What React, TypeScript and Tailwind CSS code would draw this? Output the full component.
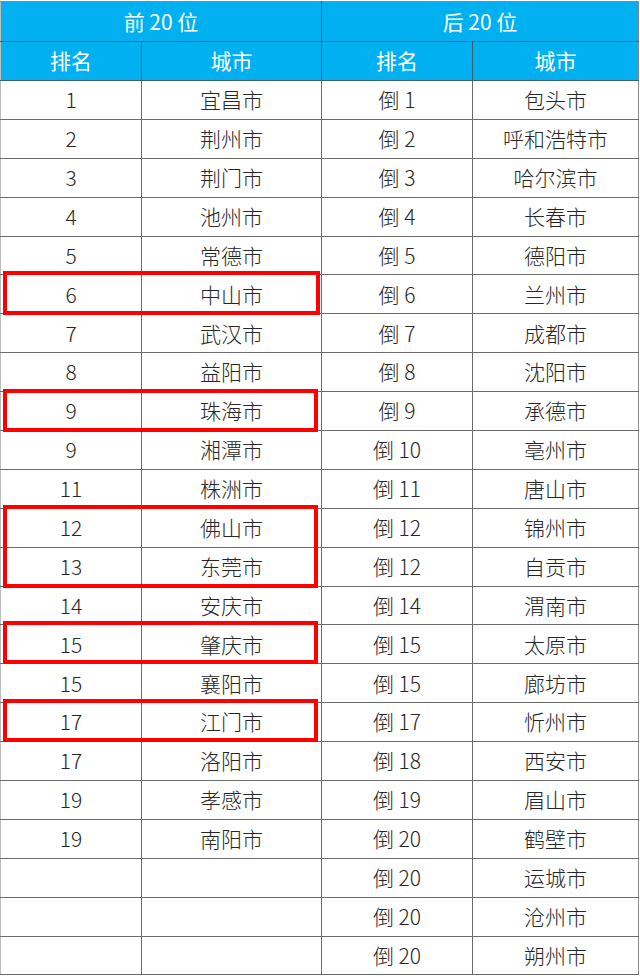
import React from "react";

const top20: [string, string][] = [
  ["1", "宜昌市"],
  ["2", "荆州市"],
  ["3", "荆门市"],
  ["4", "池州市"],
  ["5", "常德市"],
  ["6", "中山市"],
  ["7", "武汉市"],
  ["8", "益阳市"],
  ["9", "珠海市"],
  ["9", "湘潭市"],
  ["11", "株洲市"],
  ["12", "佛山市"],
  ["13", "东莞市"],
  ["14", "安庆市"],
  ["15", "肇庆市"],
  ["15", "襄阳市"],
  ["17", "江门市"],
  ["17", "洛阳市"],
  ["19", "孝感市"],
  ["19", "南阳市"],
];

const bottom20: [string, string][] = [
  ["倒 1", "包头市"],
  ["倒 2", "呼和浩特市"],
  ["倒 3", "哈尔滨市"],
  ["倒 4", "长春市"],
  ["倒 5", "德阳市"],
  ["倒 6", "兰州市"],
  ["倒 7", "成都市"],
  ["倒 8", "沈阳市"],
  ["倒 9", "承德市"],
  ["倒 10", "亳州市"],
  ["倒 11", "唐山市"],
  ["倒 12", "锦州市"],
  ["倒 12", "自贡市"],
  ["倒 14", "渭南市"],
  ["倒 15", "太原市"],
  ["倒 15", "廊坊市"],
  ["倒 17", "忻州市"],
  ["倒 18", "西安市"],
  ["倒 19", "眉山市"],
  ["倒 20", "鹤壁市"],
  ["倒 20", "运城市"],
  ["倒 20", "沧州市"],
  ["倒 20", "朔州市"],
];

const headCell =
  "border border-[#3d5f6e] bg-[#00b0f0] text-white text-[21px] font-normal text-center align-middle";
const bodyCell =
  "border border-[#6b6b6b] text-[#262626] text-[21px] font-light text-center align-middle";

export default function App() {
  const rows = bottom20.map((b, i) => ({ left: top20[i], right: b }));

  return (
    <div
      className="relative w-[640px] h-[977px] bg-white"
      style={{ fontFamily: '"Noto Sans CJK SC", "Liberation Sans", sans-serif' }}
    >
      <table className="table-fixed border-collapse w-[638px] mt-px">
        <colgroup>
          <col className="w-[141px]" />
          <col className="w-[180px]" />
          <col className="w-[151px]" />
          <col className="w-[166px]" />
        </colgroup>
        <thead>
          <tr className="h-[40px]">
            <th colSpan={2} className={headCell + " border-t-[#8a8a8a] border-l-[#bdbdbd]"}>
              前 20 位
            </th>
            <th colSpan={2} className={headCell + " border-t-[#8a8a8a] border-r-[#8a8a8a]"}>
              后 20 位
            </th>
          </tr>
          <tr className="h-[39px]">
            <th className={headCell + " border-l-[#bdbdbd]"}>排名</th>
            <th className={headCell}>城市</th>
            <th className={headCell}>排名</th>
            <th className={headCell + " border-r-[#8a8a8a]"}>城市</th>
          </tr>
        </thead>
        <tbody>
          {rows.map((r, i) => (
            <tr key={i} className="h-[38.9px]">
              <td className={bodyCell + " border-l-[#bdbdbd]"}>{r.left ? r.left[0] : ""}</td>
              <td className={bodyCell}>{r.left ? r.left[1] : ""}</td>
              <td className={bodyCell}>{r.right[0]}</td>
              <td className={bodyCell + " border-r-[#8a8a8a]"}>{r.right[1]}</td>
            </tr>
          ))}
        </tbody>
      </table>

      {/* red highlight boxes */}
      <div className="absolute left-[3px] top-[270px] w-[317px] h-[44px] border-[4px] border-[#ff0000]" />
      <div className="absolute left-[3px] top-[388px] w-[315px] h-[43px] border-[4px] border-[#ff0000]" />
      <div className="absolute left-[3px] top-[504px] w-[315px] h-[83px] border-[4px] border-[#ff0000]" />
      <div className="absolute left-[3px] top-[620px] w-[315px] h-[43px] border-[4px] border-[#ff0000]" />
      <div className="absolute left-[3px] top-[698px] w-[315px] h-[43px] border-[4px] border-[#ff0000]" />
    </div>
  );
}
